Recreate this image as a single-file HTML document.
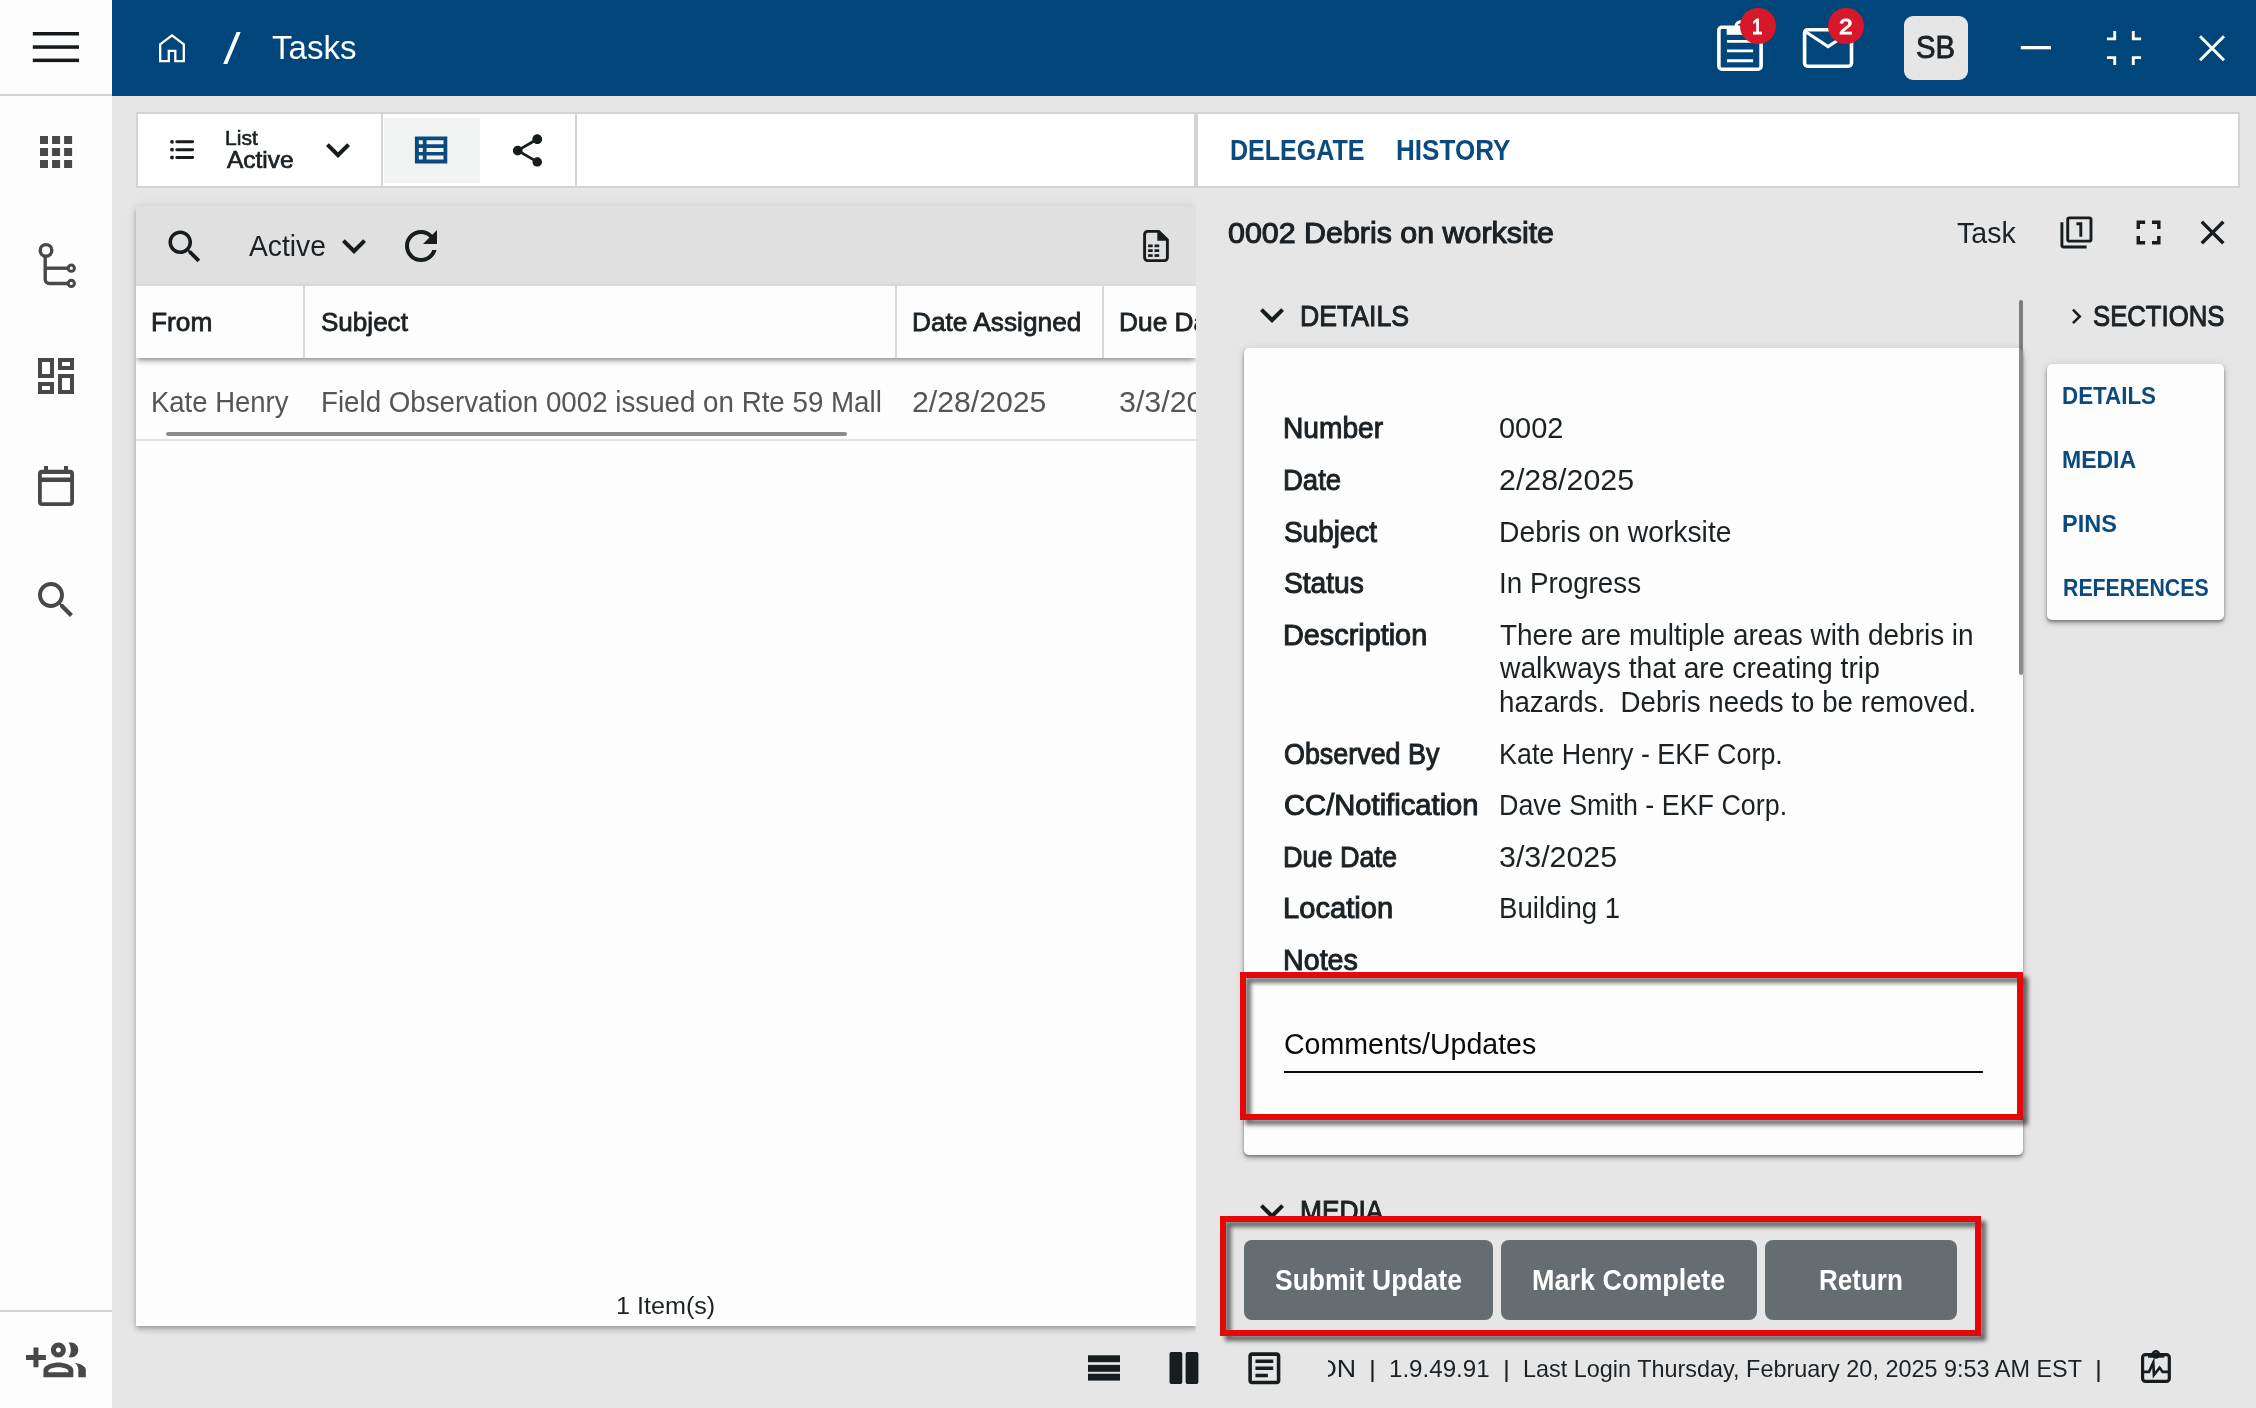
<!DOCTYPE html>
<html lang="en">
<head>
<meta charset="utf-8">
<title>Tasks</title>
<style>
*{box-sizing:border-box;margin:0;padding:0}
html,body{width:2256px;height:1408px;overflow:hidden;background:#e6e6e6;font-family:"Liberation Sans",sans-serif;color:#1b2125}
.abs,svg.i{position:absolute}
.t{position:absolute;white-space:pre;line-height:48px;transform-origin:0 0;display:block}
.layer{position:absolute;left:0;top:0;width:0;height:0}
svg.i{overflow:visible}
/* sidebar */
#sidebar{left:0;top:0;width:112px;height:1408px;background:#fdfdfd}
#sidebar .hr1{left:0;top:94px;width:112px;height:2px;background:#d2d2d2}
#sidebar .hr2{left:0;top:1310px;width:112px;height:2px;background:#d2d2d2}
/* header */
#header{left:112px;top:0;width:2144px;height:96px;background:#00467a}
.badge{width:35.6px;height:35.6px;border-radius:50%;background:#d7182a}
#avatar{left:1904px;top:16px;width:64px;height:64px;border-radius:9px;background:#e6e6e6}
/* toolbars */
.tb{background:#fff;border:2px solid #d3d3d3}
#tb1{left:136px;top:112px;width:1060px;height:76px}
#tb2{left:1196px;top:112px;width:1044px;height:76px}
#tb1 .sep{top:0;width:2px;height:72px;background:#d3d3d3}
#tb1 .sel{left:246px;top:4px;width:96px;height:65px;background:#f2f4f4}
/* list panel */
#listshadow{left:136px;top:206px;width:1060px;height:1120px;box-shadow:0 2px 4px -1px rgba(0,0,0,.2),0 4px 5px 0 rgba(0,0,0,.14),0 1px 10px 0 rgba(0,0,0,.12)}
#list{left:136px;top:206px;width:1060px;height:1120px;background:#fdfdfd;overflow:hidden}
#list .bar{left:0;top:0;width:1060px;height:80px;background:#e0e0e0}
#list .cols{left:0;top:80px;width:1060px;height:72px;background:#fdfdfd;box-shadow:0 3px 6px -1px rgba(0,0,0,.5)}
#list .cs{top:80px;width:2px;height:72px;background:#d8d8d8}
#list .rowline{left:0;top:233px;width:1060px;height:2px;background:#e3e3e3}
#list .scroll{left:30px;top:225.9px;width:681px;height:3.7px;border-radius:2px;background:rgba(0,0,0,.45)}
/* detail */
#detailbg{left:1196px;top:188px;width:1060px;height:1152px;background:#e6e6e6}
#card{left:1244px;top:348px;width:779px;height:807px;background:#fdfdfd;border-radius:5px;box-shadow:0 2px 3px -.5px rgba(0,0,0,.34),0 4px 5px 0 rgba(0,0,0,.12),0 1px 10px 0 rgba(0,0,0,.12)}
#vscroll{left:2019.3px;top:300px;width:4px;height:375px;border-radius:2px;background:rgba(0,0,0,.45)}
#sections{left:2047.2px;top:364px;width:177px;height:255.8px;background:#fdfdfd;border-radius:5px;box-shadow:0 2px 3px -.5px rgba(0,0,0,.34),0 4px 5px 0 rgba(0,0,0,.12),0 1px 10px 0 rgba(0,0,0,.12)}
.redbox{border:6.2px solid #e60808;filter:drop-shadow(5.8px 5.8px 2px rgba(0,0,0,.56))}
#rb1{left:1240px;top:972px;width:783px;height:148px}
#rb2{left:1220px;top:1216px;width:761px;height:120px}
#uline{left:1284px;top:1071px;width:699px;height:2.3px;background:#0c0c0c}
.btn{top:1240px;height:80px;border-radius:8px;background:#656d71}
#footerclip{left:1328px;top:1340px;width:800px;height:60px;overflow:hidden}
</style>
</head>
<body>
<!-- ===== left navigation rail ===== -->
<nav id="sidebar" class="abs">
  <div class="abs hr1"></div>
  <div class="abs hr2"></div>
  <svg class="i" style="left:0;top:0" width="112" height="1408" viewBox="0 0 112 1408"><rect x="32.8" y="32" width="46.2" height="3.5" fill="#15191b"/><rect x="32.8" y="45.3" width="46.2" height="3.5" fill="#15191b"/><rect x="32.8" y="58.6" width="46.2" height="3.5" fill="#15191b"/><rect x="40.00" y="136.00" width="8" height="8" fill="#484848"/><rect x="52.05" y="136.00" width="8" height="8" fill="#484848"/><rect x="64.10" y="136.00" width="8" height="8" fill="#484848"/><rect x="40.00" y="148.00" width="8" height="8" fill="#484848"/><rect x="52.05" y="148.00" width="8" height="8" fill="#484848"/><rect x="64.10" y="148.00" width="8" height="8" fill="#484848"/><rect x="40.00" y="160.00" width="8" height="8" fill="#484848"/><rect x="52.05" y="160.00" width="8" height="8" fill="#484848"/><rect x="64.10" y="160.00" width="8" height="8" fill="#484848"/><g fill="none" stroke="#484848" stroke-width="3.4"><circle cx="46" cy="250.4" r="5.8"/><path d="M45.2 256.6V279.3a4.2 4.2 0 0 0 4.2 4.2H68"/><path d="M45.2 268.2H68"/><circle cx="71.3" cy="268.2" r="3.1" stroke-width="3"/><circle cx="71.3" cy="283.4" r="3.1" stroke-width="3"/></g><path fill="#484848" fill-rule="evenodd" d="M44 466h4v3.8h16V466h4v3.8h2a4 4 0 0 1 4 4V502a4 4 0 0 1-4 4H42a4 4 0 0 1-4-4V473.8a4 4 0 0 1 4-4h2zM41.8 474v3.6h28.4V474zM41.8 481.9V502.2h28.4V481.9z"/></svg>
<svg class="i" style="left:32.0px;top:352.0px" width="48.0" height="48.0" viewBox="0 0 24 24"><path fill="#484848"  d="M19 5v2h-4V5h4M9 5v6H5V5h4m10 8v6h-4v-6h4M9 17v2H5v-2h4M21 3h-8v6h8V3zM11 3H3v10h8V3zm10 8h-8v10h8V11zm-10 4H3v6h8v-6z"/></svg>
<svg class="i" style="left:32.0px;top:576.0px" width="48.0" height="48.0" viewBox="0 0 24 24"><path fill="#484848"  d="M15.5 14h-.79l-.28-.27C15.41 12.59 16 11.11 16 9.5 16 5.91 13.09 3 9.5 3S3 5.91 3 9.5 5.91 16 9.5 16c1.61 0 3.09-.59 4.23-1.57l.27.28v.79l5 4.99L20.49 19l-4.99-5zm-6 0C7.01 14 5 11.99 5 9.5S7.01 5 9.5 5 14 7.01 14 9.5 11.99 14 9.5 14z"/></svg>
<svg class="i" style="left:26.2px;top:1330.0px" width="59.8" height="59.8" viewBox="0 0 24 24"><path fill="#484848"  d="M8 10H5V7H3v3H0v2h3v3h2v-3h3zM18 11c1.66 0 2.99-1.34 2.99-3S19.66 5 18 5c-.32 0-.63.05-.91.14.57.81.9 1.79.9 2.86s-.34 2.04-.9 2.86c.28.09.59.14.91.14zM13 11c1.66 0 2.99-1.34 2.99-3S14.66 5 13 5c-1.66 0-3 1.34-3 3s1.34 3 3 3zm0-4c.55 0 1 .45 1 1s-.45 1-1 1-1-.45-1-1 .45-1 1-1zM19.62 13.16c.83.73 1.38 1.66 1.38 2.84v3h3v-3c0-1.54-2.37-2.49-4.38-2.84zM13 13c-2 0-6 1-6 3v3h12v-3c0-2-4-3-6-3zm4 4H9v-.66c.1-.62 2.13-1.33 4-1.34 1.87.01 3.87.72 4 1.34V17z"/></svg>
</nav>

<!-- ===== top app bar ===== -->
<header id="header" class="abs"></header>
<div class="layer" id="header-content">
  <svg class="i" style="left:0;top:0" width="2256" height="96" viewBox="0 0 2256 96"><path fill="none" stroke="#fff" stroke-width="2.3" stroke-linejoin="miter" d="M168.8 61.2H160.2V44.3L172 35.4L183.8 44.3V61.2H175.3V50.9H168.8Z"/><path fill="#fff" d="M236.6 32h4.1L227.3 63.9h-4.1z"/><g fill="none" stroke="#fff" stroke-width="3.6"><rect x="1718.9" y="27.2" width="42.2" height="42" rx="3"/><path stroke-width="2.9" d="M1727 41.4h26.1M1727 50.9h26.1M1727 60.7h26.1"/></g><rect x="1726.7" y="27" width="27.6" height="7.8" fill="#fff"/><circle cx="1740.5" cy="26.2" r="4.4" fill="none" stroke="#fff" stroke-width="3.2"/><g fill="none" stroke="#fff" stroke-width="3.6" stroke-linejoin="round"><rect x="1804.6" y="29.7" width="46.9" height="36.5" rx="3"/><path stroke-width="3.2" stroke-linejoin="miter" d="M1806 32L1828.1 46.6L1850.2 32"/></g><rect x="2020.8" y="46" width="30.2" height="3.3" fill="#fff"/><path fill="none" stroke="#fff" stroke-width="2.9" d="M2114.7 31.1v7.8h-7.8M2133.3 31.1v7.8h7.8M2106.9 57.6h7.8v7.5M2141.1 57.6h-7.8v7.5"/><path fill="none" stroke="#fff" stroke-width="3" d="M2200 36.2L2224 60.3M2224 36.2L2200 60.3"/></svg>
  <div id="avatar" class="abs"></div>
  <div class="abs badge" style="left:1740.4px;top:8px"></div>
  <div class="abs badge" style="left:1828.2px;top:8px"></div>
  <span class="t" style="left:271.55px;top:24px;font-size:33.25px;transform:scaleX(0.9950);color:#ffffff;">Tasks</span>
<span class="t" style="left:1751.58px;top:3px;font-size:21.75px;-webkit-text-stroke:1.0px;transform:scaleX(0.8624);color:#ffffff;">1</span>
<span class="t" style="left:1839.34px;top:3px;font-size:21.75px;-webkit-text-stroke:1.0px;transform:scaleX(1.1301);color:#ffffff;">2</span>
<span class="t" style="left:1916.04px;top:23px;font-size:32.0px;-webkit-text-stroke:0.9px;transform:scaleX(0.9142);">SB</span>
</div>

<!-- ===== toolbars ===== -->
<div id="tb1" class="abs tb">
  <div class="abs sel"></div>
  <div class="abs sep" style="left:243px"></div>
  <div class="abs sep" style="left:437px"></div>
</div>
<div id="tb2" class="abs tb"></div>
<div class="layer" id="toolbar-content">
  <svg class="i" style="left:0;top:0" width="600" height="190" viewBox="0 0 600 190"><circle cx="172" cy="141.8" r="1.9" fill="#171c1f"/><path d="M176.8 141.8H192.7" stroke="#171c1f" stroke-width="2.9" stroke-linecap="round"/><circle cx="172" cy="149.7" r="1.9" fill="#171c1f"/><path d="M176.8 149.7H192.7" stroke="#171c1f" stroke-width="2.9" stroke-linecap="round"/><circle cx="172" cy="157.5" r="1.9" fill="#171c1f"/><path d="M176.8 157.5H192.7" stroke="#171c1f" stroke-width="2.9" stroke-linecap="round"/><path fill="#0b4a7f" fill-rule="evenodd" d="M414.9 136.5h32.4v26.9h-32.4zM418.8 140.3h4v4h-4zM426.6 140.3h16.9v4h-16.9zM418.8 148.0h4v4h-4zM426.6 148.0h16.9v4h-16.9zM418.8 155.6h4v4h-4zM426.6 155.6h16.9v4h-16.9z"/></svg>
<svg class="i" style="left:313.5px;top:125.7px" width="48.0" height="48.0" viewBox="0 0 24 24"><path fill="#171c1f"  d="M16.59 8.59L12 13.17 7.41 8.59 6 10l6 6 6-6z"/></svg>
<svg class="i" style="left:507.9px;top:130.9px" width="39.0" height="39.0" viewBox="0 0 24 24"><path fill="#171c1f"  d="M18 16.08c-.76 0-1.44.3-1.96.77L8.91 12.7c.05-.23.09-.46.09-.7s-.04-.47-.09-.7l7.05-4.11c.54.5 1.25.81 2.04.81 1.66 0 3-1.34 3-3s-1.34-3-3-3-3 1.34-3 3c0 .24.04.47.09.7L8.04 9.81C7.5 9.31 6.79 9 6 9c-1.66 0-3 1.34-3 3s1.34 3 3 3c.79 0 1.5-.31 2.04-.81l7.12 4.16c-.05.21-.08.43-.08.65 0 1.61 1.31 2.92 2.92 2.92 1.61 0 2.92-1.31 2.92-2.92s-1.31-2.92-2.92-2.92z"/></svg>
  <span class="t" style="left:225.30px;top:114px;font-size:20.25px;-webkit-text-stroke:0.6px;transform:scaleX(1.0413);">List</span>
<span class="t" style="left:226.95px;top:136px;font-size:23.25px;-webkit-text-stroke:0.7px;transform:scaleX(1.0519);">Active</span>
  <span class="t" style="left:1229.92px;top:126px;font-size:29.0px;font-weight:700;transform:scaleX(0.8641);color:#0b4a7f;">DELEGATE</span>
<span class="t" style="left:1396.15px;top:126px;font-size:29.0px;font-weight:700;transform:scaleX(0.8984);color:#0b4a7f;">HISTORY</span>
</div>

<!-- ===== task list panel ===== -->
<div id="listshadow" class="abs"></div>
<section id="list" class="abs">
  <div class="abs bar"></div>
  <div class="abs rowline"></div>
  <div class="abs scroll"></div>
  <div class="abs cols"></div>
  <div class="abs cs" style="left:167px"></div>
  <div class="abs cs" style="left:759px"></div>
  <div class="abs cs" style="left:966px"></div>
  <div class="layer" style="left:-136px;top:-206px">
    <svg class="i" style="left:163.0px;top:224.9px" width="43.6" height="43.6" viewBox="0 0 24 24"><path fill="#171c1f"  d="M15.5 14h-.79l-.28-.27C15.41 12.59 16 11.11 16 9.5 16 5.91 13.09 3 9.5 3S3 5.91 3 9.5 5.91 16 9.5 16c1.61 0 3.09-.59 4.23-1.57l.27.28v.79l5 4.99L20.49 19l-4.99-5zm-6 0C7.01 14 5 11.99 5 9.5S7.01 5 9.5 5 14 7.01 14 9.5 11.99 14 9.5 14z"/></svg>
<svg class="i" style="left:329.5px;top:221.6px" width="48.0" height="48.0" viewBox="0 0 24 24"><path fill="#171c1f"  d="M16.59 8.59L12 13.17 7.41 8.59 6 10l6 6 6-6z"/></svg>
<svg class="i" style="left:397.0px;top:221.8px" width="48.0" height="48.0" viewBox="0 0 24 24"><path fill="#171c1f"  d="M17.65 6.35C16.2 4.9 14.21 4 12 4c-4.42 0-7.99 3.58-7.99 8s3.57 8 7.99 8c3.73 0 6.84-2.55 7.73-6h-2.08c-.82 2.33-3.04 4-5.65 4-3.31 0-6-2.69-6-6s2.69-6 6-6c1.66 0 3.14.69 4.22 1.78L13 11h7V4l-2.35 2.35z"/></svg>
<svg class="i" style="left:0;top:0" width="1200" height="290" viewBox="0 0 1200 290"><path fill="none" stroke="#171c1f" stroke-width="2.9" stroke-linejoin="round" d="M1147.6 231.4H1158.6L1167.4 239.9V257.6a3 3 0 0 1-3 3H1147.6a3 3 0 0 1-3-3V234.4a3 3 0 0 1 3-3Z"/><path fill="#171c1f" d="M1157.3 231.4h1.8l8.3 8.2v1.2h-10.1z"/><rect x="1148.1" y="244.5" width="4.6" height="2.7" fill="#171c1f"/><rect x="1154.5" y="244.5" width="4.7" height="2.7" fill="#171c1f"/><rect x="1148.1" y="249.3" width="4.6" height="2.7" fill="#171c1f"/><rect x="1154.5" y="249.3" width="4.7" height="2.7" fill="#171c1f"/><rect x="1148.1" y="254.2" width="4.6" height="2.7" fill="#171c1f"/><rect x="1154.5" y="254.2" width="4.7" height="2.7" fill="#171c1f"/></svg>
    <span class="t" style="left:248.58px;top:222px;font-size:29.0px;transform:scaleX(0.9740);">Active</span>
<span class="t" style="left:151.17px;top:298px;font-size:26.0px;-webkit-text-stroke:0.8px;transform:scaleX(1.0104);">From</span>
<span class="t" style="left:321.07px;top:298px;font-size:26.0px;-webkit-text-stroke:0.8px;transform:scaleX(1.0017);">Subject</span>
<span class="t" style="left:912.29px;top:298px;font-size:26.0px;-webkit-text-stroke:0.8px;transform:scaleX(1.0102);">Date Assigned</span>
<span class="t" style="left:1118.97px;top:298px;font-size:26.0px;-webkit-text-stroke:0.8px;transform:scaleX(1.0117);">Due Date</span>
<span class="t" style="left:150.98px;top:378px;font-size:29.0px;transform:scaleX(0.9476);color:#555555;">Kate Henry</span>
<span class="t" style="left:320.87px;top:378px;font-size:29.0px;transform:scaleX(0.9558);color:#555555;">Field Observation 0002 issued on Rte 59 Mall</span>
<span class="t" style="left:912.47px;top:378px;font-size:29.0px;transform:scaleX(1.0412);color:#555555;">2/28/2025</span>
<span class="t" style="left:1119.26px;top:378px;font-size:29.0px;transform:scaleX(1.0483);color:#555555;">3/3/2025</span>
<span class="t" style="left:616.11px;top:1282px;font-size:24.75px;transform:scaleX(1.0160);">1 Item(s)</span>
  </div>
</section>

<!-- ===== task detail panel ===== -->
<section id="detailbg" class="abs"></section>
<div class="layer" id="detail">
  <svg class="i" style="left:2059.1px;top:215.0px" width="34.9" height="34.9" viewBox="0 0 24 24"><path fill="#171c1f"  d="M3 5H1v16c0 1.1.9 2 2 2h16v-2H3V5zm11 10h2V5h-4v2h2v8zm7-14H7c-1.1 0-2 .9-2 2v14c0 1.1.9 2 2 2h14c1.1 0 2-.9 2-2V3c0-1.1-.9-2-2-2zm0 16H7V3h14v14z"/></svg>
<svg class="i" style="left:2128.0px;top:211.9px" width="41.1" height="41.1" viewBox="0 0 24 24"><path fill="#171c1f"  d="M7 14H5v5h5v-2H7v-3zm-2-4h2V7h3V5H5v5zm12 7h-3v2h5v-5h-2v3zM14 5v2h3v3h2V5h-5z"/></svg>
<svg class="i" style="left:2191.8px;top:211.8px" width="41.1" height="41.1" viewBox="0 0 24 24"><path fill="#171c1f"  d="M19 6.41L17.59 5 12 10.59 6.41 5 5 6.41 10.59 12 5 17.59 6.41 19 12 13.41 17.59 19 19 17.59 13.41 12z"/></svg>
<svg class="i" style="left:1248.2px;top:291.3px" width="48.0" height="48.0" viewBox="0 0 24 24"><path fill="#171c1f"  d="M16.59 8.59L12 13.17 7.41 8.59 6 10l6 6 6-6z"/></svg>
<svg class="i" style="left:2060.8px;top:300.6px" width="30.8" height="30.8" viewBox="0 0 24 24"><path fill="#171c1f"  d="M10 6L8.59 7.41 13.17 12l-4.58 4.59L10 18l6-6z"/></svg>
  <span class="t" style="left:1227.96px;top:209px;font-size:29.0px;-webkit-text-stroke:1.05px;transform:scaleX(1.0479);">0002 Debris on worksite</span>
<span class="t" style="left:1957.04px;top:209px;font-size:29.0px;transform:scaleX(0.9852);">Task</span>
<span class="t" style="left:1299.62px;top:292px;font-size:29.0px;-webkit-text-stroke:1.0px;transform:scaleX(0.9182);">DETAILS</span>
<span class="t" style="left:2092.59px;top:292px;font-size:29.0px;-webkit-text-stroke:1.0px;transform:scaleX(0.8863);">SECTIONS</span>
  <div id="card" class="abs"></div>
  <div id="vscroll" class="abs"></div>
  <div id="sections" class="abs"></div>
  <span class="t" style="left:2062.47px;top:372px;font-size:24.75px;font-weight:700;transform:scaleX(0.9036);color:#0b4a7f;">DETAILS</span>
<span class="t" style="left:2062.42px;top:436px;font-size:24.75px;font-weight:700;transform:scaleX(0.9293);color:#0b4a7f;">MEDIA</span>
<span class="t" style="left:2062.39px;top:500px;font-size:24.75px;font-weight:700;transform:scaleX(0.9491);color:#0b4a7f;">PINS</span>
<span class="t" style="left:2062.53px;top:564px;font-size:24.75px;font-weight:700;transform:scaleX(0.8610);color:#0b4a7f;">REFERENCES</span>
  <span class="t" style="left:1283.43px;top:404px;font-size:29.0px;-webkit-text-stroke:1.0px;transform:scaleX(0.9705);">Number</span>
<span class="t" style="left:1499.26px;top:404px;font-size:29.0px;transform:scaleX(0.9991);">0002</span>
<span class="t" style="left:1283.45px;top:456px;font-size:29.0px;-webkit-text-stroke:1.0px;transform:scaleX(0.9481);">Date</span>
<span class="t" style="left:1498.93px;top:456px;font-size:29.0px;transform:scaleX(1.0467);">2/28/2025</span>
<span class="t" style="left:1284.10px;top:508px;font-size:29.0px;-webkit-text-stroke:1.0px;transform:scaleX(0.9622);">Subject</span>
<span class="t" style="left:1498.92px;top:508px;font-size:29.0px;transform:scaleX(0.9746);">Debris on worksite</span>
<span class="t" style="left:1284.10px;top:559px;font-size:29.0px;-webkit-text-stroke:1.0px;transform:scaleX(0.9710);">Status</span>
<span class="t" style="left:1498.90px;top:559px;font-size:29.0px;transform:scaleX(0.9584);">In Progress</span>
<span class="t" style="left:1283.38px;top:611px;font-size:29.0px;-webkit-text-stroke:1.0px;transform:scaleX(0.9939);">Description</span>
<span class="t" style="left:1500.14px;top:611px;font-size:29.0px;transform:scaleX(0.9634);">There are multiple areas with debris in</span>
<span class="t" style="left:1500.32px;top:644px;font-size:29.0px;transform:scaleX(0.9738);">walkways that are creating trip</span>
<span class="t" style="left:1499.41px;top:678px;font-size:29.0px;transform:scaleX(0.9547);">hazards.  Debris needs to be removed.</span>
<span class="t" style="left:1284.43px;top:730px;font-size:29.0px;-webkit-text-stroke:1.0px;transform:scaleX(0.9270);">Observed By</span>
<span class="t" style="left:1499.41px;top:730px;font-size:29.0px;transform:scaleX(0.9269);">Kate Henry - EKF Corp.</span>
<span class="t" style="left:1284.07px;top:781px;font-size:29.0px;-webkit-text-stroke:1.0px;transform:scaleX(1.0060);">CC/Notification</span>
<span class="t" style="left:1499.21px;top:781px;font-size:29.0px;transform:scaleX(0.9263);">Dave Smith - EKF Corp.</span>
<span class="t" style="left:1283.47px;top:833px;font-size:29.0px;-webkit-text-stroke:1.0px;transform:scaleX(0.9312);">Due Date</span>
<span class="t" style="left:1499.36px;top:833px;font-size:29.0px;transform:scaleX(1.0464);">3/3/2025</span>
<span class="t" style="left:1283.38px;top:884px;font-size:29.0px;-webkit-text-stroke:1.0px;transform:scaleX(1.0043);">Location</span>
<span class="t" style="left:1498.97px;top:884px;font-size:29.0px;transform:scaleX(0.9514);">Building 1</span>
<span class="t" style="left:1283.40px;top:936px;font-size:29.0px;-webkit-text-stroke:1.0px;transform:scaleX(0.9883);">Notes</span>
<span class="t" style="left:1283.70px;top:1020px;font-size:29.0px;transform:scaleX(0.9841);color:#0a0a0a;">Comments/Updates</span>
  <div id="uline" class="abs"></div>
  <div id="rb1" class="abs redbox"></div>
  <svg class="i" style="left:1248.2px;top:1187.0px" width="48.0" height="48.0" viewBox="0 0 24 24"><path fill="#171c1f"  d="M16.59 8.59L12 13.17 7.41 8.59 6 10l6 6 6-6z"/></svg>
  <span class="t" style="left:1299.72px;top:1187px;font-size:29.0px;-webkit-text-stroke:1.0px;transform:scaleX(0.9069);">MEDIA</span>
  <div id="rb2" class="abs redbox"></div>
  <div class="abs btn" style="left:1244px;width:249px"></div>
  <div class="abs btn" style="left:1501px;width:256px"></div>
  <div class="abs btn" style="left:1765px;width:192px"></div>
  <span class="t" style="left:1275.42px;top:1256px;font-size:29.0px;font-weight:700;transform:scaleX(0.9134);color:#ffffff;">Submit Update</span>
<span class="t" style="left:1532.23px;top:1256px;font-size:29.0px;font-weight:700;transform:scaleX(0.9299);color:#ffffff;">Mark Complete</span>
<span class="t" style="left:1818.95px;top:1256px;font-size:29.0px;font-weight:700;transform:scaleX(0.8979);color:#ffffff;">Return</span>
</div>

<!-- ===== status bar ===== -->
<footer class="layer" id="footer">
  <svg class="i" style="left:0;top:0" width="2256" height="1408" viewBox="0 0 2256 1408"><rect x="1088" y="1355.3" width="32" height="6.9" fill="#171c1f"/><rect x="1088" y="1364.9" width="32" height="6.9" fill="#171c1f"/><rect x="1088" y="1373.7" width="32" height="6.9" fill="#171c1f"/><rect x="1169.5" y="1352.1" width="12.8" height="31.9" rx="2" fill="#171c1f"/><rect x="1185.6" y="1352.1" width="12.8" height="31.9" rx="2" fill="#171c1f"/><rect x="2142.6" y="1354.6" width="26.7" height="26.8" rx="3" fill="none" stroke="#171c1f" stroke-width="3.2"/><rect x="2148" y="1353" width="16.3" height="4.7" fill="#171c1f"/><circle cx="2155.9" cy="1354.4" r="3.1" fill="none" stroke="#171c1f" stroke-width="2.6"/><path fill="none" stroke="#171c1f" stroke-width="2.6" stroke-linejoin="miter" stroke-miterlimit="10" d="M2143 1371.9H2149L2153.3 1362.5L2153.9 1375L2159.6 1367.6L2162.6 1371.9H2169"/></svg>
<svg class="i" style="left:1242.9px;top:1346.8px" width="42.7" height="42.7" viewBox="0 0 24 24"><path fill="#171c1f"  d="M19 5v14H5V5h14m0-2H5c-1.1 0-2 .9-2 2v14c0 1.1.9 2 2 2h14c1.1 0 2-.9 2-2V5c0-1.1-.9-2-2-2zm-5 14H7v-2h7v2zm3-4H7v-2h10v2zm0-4H7V7h10v2z"/></svg>
  <div id="footerclip" class="abs"><div class="layer" style="left:-1328px;top:-1340px">
  <span class="t" style="left:1315.64px;top:1345px;font-size:24.0px;transform:scaleX(1.1171);">ON</span>
<span class="t" style="left:1368.86px;top:1345px;font-size:24.0px;transform:scaleX(1.1135);">|</span>
<span class="t" style="left:1388.51px;top:1345px;font-size:24.0px;transform:scaleX(1.0048);">1.9.49.91</span>
<span class="t" style="left:1503.06px;top:1345px;font-size:24.0px;transform:scaleX(1.1135);">|</span>
<span class="t" style="left:1522.61px;top:1345px;font-size:24.0px;transform:scaleX(0.9760);">Last Login Thursday, February 20, 2025 9:53 AM EST</span>
<span class="t" style="left:2095.36px;top:1345px;font-size:24.0px;transform:scaleX(1.1135);">|</span>
  </div></div>
</footer>
</body>
</html>
